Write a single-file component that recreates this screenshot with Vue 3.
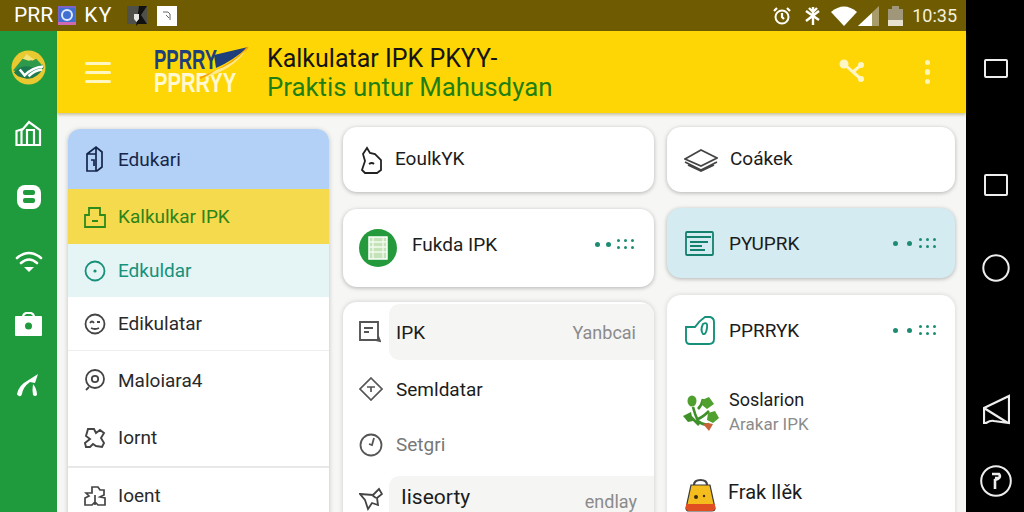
<script setup>
</script>

<template>
  <div class="screen">
    <div class="left">
      <div class="status">
        <span class="st-text">PRR</span>
        <svg class="st-app" width="18" height="19" viewBox="0 0 18 19"><rect width="18" height="19" fill="#7a63c9"/><rect x="1" y="2" width="16" height="14" fill="#3f6fd0"/><circle cx="9" cy="9" r="5" fill="none" stroke="#dfe9ff" stroke-width="2"/><rect y="16" width="18" height="3" fill="#d06ab0"/></svg>
        <span class="st-text st-ky">KY</span>
        <svg class="st-shield" width="20" height="20" viewBox="0 0 20 20"><rect width="20" height="18" fill="#50504a"/><path d="M12 0h8l-6 9 6 9h-9l-2 2z" fill="#111"/><path d="M7 8h5v5l-2.500 3-2.500-3z" fill="#e6e6e2"/></svg>
        <svg class="st-box" width="20" height="20" viewBox="0 0 20 20"><rect width="20" height="20" fill="#fff"/><path d="M6 6h5l2 2v6M9 9l3 3" stroke="#666" fill="none"/></svg>
        <div class="st-right">
          <svg width="20" height="20" viewBox="0 0 20 20" fill="none" stroke="#fff" stroke-width="2"><circle cx="10" cy="11" r="6.500"/><path d="M10 7v4l2 2M2 5l3-3M18 5l-3-3" stroke-width="2.200"/></svg>
          <svg class="m12" width="18" height="20" viewBox="0 0 18 20" fill="none" stroke="#fff" stroke-width="2.400"><path d="M9 1v18M2 5l13 9M2 15l13-10M5 2l4 4M13 2l-4 4"/></svg>
          <svg class="m9" width="26" height="20" viewBox="0 0 26 20"><path d="M0 6q13-11 26 0L13 20z" fill="#fff"/></svg>
          <svg class="m1" width="21" height="20" viewBox="0 0 21 20"><path d="M0 20 21 0v20z" fill="#a89d6a"/><path d="M0 20 14 7v13z" fill="#fff"/></svg>
          <svg class="m9" width="15" height="20" viewBox="0 0 15 20"><rect x="4" y="0" width="7" height="3" fill="#a0977a"/><rect y="3" width="15" height="11" fill="#a0977a"/><rect y="14" width="15" height="6" fill="#e6e2cf"/></svg>
          <span class="st-time">10:35</span>
        </div>
      </div>

      <div class="body">
        <nav class="rail">
          <svg class="rail-logo" width="35" height="35" viewBox="0 0 36 36">
            <circle cx="18" cy="18" r="17.500" fill="#e8c92f"/>
            <path d="M2 21 12 9l4-4 6 6 4-2 8 9-4 4-15 2z" fill="#2c9a4a"/>
            <path d="M12 9l4-5 8 6-6 1z" fill="#f2e27a"/>
            <path d="M3 23q7-8 15-6t15-2q0 7-6 11-6 5-13 3-8-1-11-6z" fill="#1d7a50"/>
            <path d="M9 20l5 6q8-8 19-9M18 27q6-6 14-7" stroke="#fff" stroke-width="2.600" fill="none"/>
          </svg>
          <svg class="ri ri1" width="28" height="26" viewBox="0 0 28 26" fill="none" stroke="#fff" stroke-width="2.200"><path d="M1.500 25V11l5-1.500V25zM7 10l1-1 6-7 11 8v15H1.500M12 25V10h7v15"/></svg>
          <svg class="ri ri2" width="26" height="26" viewBox="0 0 26 26"><rect x="1" y="1" width="24" height="24" rx="8" fill="#fff"/><rect x="7" y="6" width="12" height="5" rx="2" fill="#1f9a3c"/><rect x="7" y="14" width="12" height="5" rx="2" fill="#1f9a3c"/></svg>
          <svg class="ri ri3" width="28" height="24" viewBox="0 0 28 24" fill="none" stroke="#fff" stroke-width="2.600" stroke-linecap="round"><path d="M2 9q12-10 24 0M6 14q8-7 16 0"/><path d="M9 18h10l-5 5z" fill="#fff" stroke="none"/></svg>
          <svg class="ri ri4" width="27" height="24" viewBox="0 0 27 24"><path d="M8 5q0-3 3-4h5q3 1 3 4" fill="none" stroke="#fff" stroke-width="2"/><rect y="4" width="27" height="20" rx="1" fill="#fff"/><circle cx="13.500" cy="14" r="3.500" fill="#1f9a3c"/></svg>
          <svg class="ri ri5" width="24" height="24" viewBox="0 0 24 24" fill="#fff"><path d="M1 21Q3 12 11 8L22 1l-3 9-5-1q-7 5-8 12-1 3-3 2t-2-2z"/><path d="M17 11q4 5 4 11-2 2-4 0-1-5 0-11z"/></svg>
        </nav>

        <div class="main">
          <header class="appbar">
            <div class="burger"><i></i><i></i><i></i></div>
            <div class="brand">
              <span class="brand-top">PPRRY</span>
              <span class="brand-bot">PPRRYY</span>
              <svg class="swoosh" width="96" height="50" viewBox="0 0 96 50"><path d="M60 10 94 2Q80 15 62 23z" fill="#1d3f7c"/><path d="M94 2Q80 20 46 33" stroke="#f7a400" stroke-width="2" fill="none"/><path d="M62 25Q78 20 92 5 80 24 50 33z" fill="#ffe98a"/></svg>
            </div>
            <div class="titles">
              <div class="t1">Kalkulatar IPK PKYY-</div>
              <div class="t2">Praktis untur Mahusdyan</div>
            </div>
            <svg class="share" width="27" height="25" viewBox="0 0 27 25" fill="none" stroke="#fff6c8" stroke-width="3" stroke-linecap="round"><path d="M6 6l9 8 8-7M15 14l8 7"/><circle cx="6" cy="6" r="4.500" fill="#fff6c8" stroke="none"/><circle cx="23" cy="7" r="3" fill="#fff6c8" stroke="none"/><circle cx="23" cy="21" r="3" fill="#fff6c8" stroke="none"/></svg>
            <div class="kebab"><i></i><i></i><i></i></div>
          </header>

          <div class="content">
            <aside class="side">
              <div class="srow s-blue">
                <svg width="22" height="28" viewBox="0 0 22 28" fill="none" stroke="#15254a" stroke-width="1.700"><path d="M3 9l9-7 6 5v15l-5 4H3zM12 2v24M3 9h9M7 15h3v6"/></svg>
                <span>Edukari</span>
              </div>
              <div class="srow s-yellow">
                <svg width="22" height="22" viewBox="0 0 22 22" fill="none" stroke="#2f8a1c" stroke-width="1.800"><path d="M1 9h4V2h11v7h5v12H1zM8 15h6"/></svg>
                <span>Kalkulkar IPK</span>
              </div>
              <div class="srow s-teal">
                <svg width="22" height="22" viewBox="0 0 22 22" fill="none" stroke="#17907a" stroke-width="1.800"><circle cx="11" cy="11" r="9.500"/><circle cx="11" cy="11" r="1.600" fill="#17907a" stroke="none"/></svg>
                <span>Edkuldar</span>
              </div>
              <div class="srow s-line">
                <svg width="22" height="22" viewBox="0 0 22 22" fill="none" stroke="#444" stroke-width="1.800"><circle cx="11" cy="11" r="9.500"/><path d="M6 10q2-3 4 0M13 9h3M7 15q4 2 8 0"/></svg>
                <span>Edikulatar</span>
              </div>
              <div class="srow s-h58">
                <svg width="22" height="22" viewBox="0 0 22 22" fill="none" stroke="#444" stroke-width="1.800"><circle cx="11" cy="10" r="9"/><circle cx="11" cy="10" r="3.200"/><path d="M5 18l-3 3"/></svg>
                <span>Maloiara4</span>
              </div>
              <div class="srow s-line2 s-h59">
                <svg width="22" height="22" viewBox="0 0 22 22" fill="none" stroke="#444" stroke-width="1.900"><path d="M4 2h6l2 4 4-3 4 3-3 5 3 5-2 4-6-1-3-2-3 3H2l-1-4 5-4-4-3z"/></svg>
                <span>Iornt</span>
              </div>
              <div class="srow">
                <svg width="22" height="22" viewBox="0 0 22 22" fill="none" stroke="#444" stroke-width="1.700"><path d="M2 9h6V3h6l2 3h4v5l-4 2 5 1v7h-7l-3-3-3 3H1v-7l4-2zM11 11v10"/></svg>
                <span>Ioent</span>
              </div>
            </aside>

            <section class="col col2">
              <div class="card c-a">
                <svg width="24" height="28" viewBox="0 0 24 28" fill="none" stroke="#222" stroke-width="1.800"><path d="M3 8l4-6 3 5 5 1 6 6v10l-4 3H5L2 24l3-9zM9 18q3-2 5 0"/></svg>
                <span class="ct">EoulkYK</span>
              </div>
              <div class="card c-b">
                <svg width="38" height="38" viewBox="0 0 38 38"><circle cx="19" cy="19" r="19" fill="#249a3c"/><rect x="10" y="8" width="18" height="22" fill="#c5e3b8" stroke="#fff" stroke-width="1.500"/><path d="M10 13h18M10 18h18M10 23h18M14 8v22M24 8v22" stroke="#f3fbef" stroke-width="1.300"/></svg>
                <span class="ct ct-b">Fukda IPK</span>
                <span class="dots up"><b></b><b></b><em><u v-for="n in 6" :key="n"></u></em></span>
              </div>
              <div class="card list">
                <div class="lrow lr1">
                  <svg class="li" width="22" height="22" viewBox="0 0 22 22" fill="none" stroke="#555" stroke-width="1.900"><path d="M1 1h18v18H1zM5 7h9M5 11h5M17 19l4 1-2-5"/></svg>
                  <div class="lr-box"><span class="ct">IPK</span><span class="muted">Yanbcai</span></div>
                </div>
                <div class="lrow lr2">
                  <svg class="li" width="24" height="24" viewBox="0 0 24 24" fill="none" stroke="#555" stroke-width="1.700"><path d="M12 1l11 11-11 11L1 12zM8 10h8M12 10v5"/></svg>
                  <span class="ct">Semldatar</span>
                </div>
                <div class="lrow lr3">
                  <svg class="li" width="24" height="24" viewBox="0 0 24 24" fill="none" stroke="#555" stroke-width="1.800"><circle cx="12" cy="12" r="10.500"/><path d="M15 5l-2 7-3-1"/></svg>
                  <span class="ct gray">Setgri</span>
                </div>
                <div class="lrow lr4">
                  <svg class="li" width="24" height="24" viewBox="0 0 24 24" fill="none" stroke="#444" stroke-width="1.800"><path d="M1 7l13 1 6-6 3 5-5 4 1 7-6-2-4 6-3-9zM13 8l4 3"/></svg>
                  <div class="lr-box lr-box2"><span class="ct big">Iiseorty</span><span class="muted">endlay</span></div>
                </div>
              </div>
            </section>

            <section class="col col3">
              <div class="card c-a">
                <svg width="34" height="24" viewBox="0 0 34 24" fill="none" stroke="#444" stroke-width="1.700"><path d="M1 11L17 2l16 8-16 8zM1 14l16 8 16-8M4 17l13 6 13-6"/></svg>
                <span class="ct c3t">Coákek</span>
              </div>
              <div class="card c-c">
                <svg width="29" height="25" viewBox="0 0 29 25" fill="none" stroke="#16806f" stroke-width="1.800"><rect x="1" y="1" width="27" height="23" rx="1"/><path d="M1 6h25M5 11h18M5 15h12M5 19h15"/></svg>
                <span class="ct c3t c3t2">PYUPRK</span>
                <span class="dots d3"><b></b><b></b><em><u v-for="n in 6" :key="n"></u></em></span>
              </div>
              <div class="card feed">
                <div class="frow f1">
                  <svg width="30" height="30" viewBox="0 0 30 30" fill="none" stroke="#16907a" stroke-width="1.900"><path d="M1 12h9q4-6 10-10h5q4 1 4 5v17q0 5-5 5H5q-4 0-4-4z"/><path d="M18 9q5-3 4 4t-4 6q-3-4 0-10z"/></svg>
                  <span class="ct c3t">PPRRYK</span>
                  <span class="dots d3"><b></b><b></b><em><u v-for="n in 6" :key="n"></u></em></span>
                </div>
                <div class="frow f2">
                  <svg width="36" height="38" viewBox="0 0 36 38">
                    <path d="M10 14q2 8 5 14 6 5 11 3M20 6q-1 6-5 10M26 18q-6 6-11 8M8 24l8 8" stroke="#3f8f2a" stroke-width="2.600" fill="none"/>
                    <ellipse cx="9" cy="8" rx="4.500" ry="5.500" fill="#4fa02e"/><path d="M19 7l7-3 5 7-7 5-5-4z" fill="#4fa02e"/><path d="M25 20l7-2 4 7-6 5-6-3z" fill="#4fa02e"/><path d="M0 23l8-4 2 9-5 1z" fill="#3f9128"/><path d="M20 31l5-1 5 1-4 7z" fill="#c8633a"/>
                  </svg>
                  <div class="ftext"><span class="ct">Soslarion</span><span class="muted">Arakar IPK</span></div>
                </div>
                <div class="frow f3">
                  <svg width="31" height="34" viewBox="0 0 31 34"><path d="M9 7q0-5 6.500-5T22 7" fill="none" stroke="#444" stroke-width="2.200"/><path d="M6 7h19l5 23q0 3-3 3H4q-3 0-3-3z" fill="#f4bd1d" stroke="#3a3a3a" stroke-width="1.200"/><path d="M1 26h29v4q0 3-3 3H4q-3 0-3-3z" fill="#e04f22"/><circle cx="11" cy="19" r="2" fill="#3a2a10"/><circle cx="19" cy="18" r="1.200" fill="#3a2a10"/></svg>
                  <span class="ct">Frak lIěk</span>
                </div>
              </div>
            </section>
          </div>
        </div>
      </div>
    </div>

    <aside class="navbar">
      <svg class="n1" width="24" height="19" viewBox="0 0 24 19" fill="none" stroke="#eee" stroke-width="2"><rect x="1" y="1" width="22" height="17" rx="1"/></svg>
      <svg class="n2" width="24" height="22" viewBox="0 0 24 22" fill="none" stroke="#eee" stroke-width="2"><rect x="1" y="1" width="22" height="20" rx="1"/></svg>
      <svg class="n3" width="28" height="28" viewBox="0 0 28 28" fill="none" stroke="#eee" stroke-width="2"><circle cx="14" cy="14" r="12.700"/></svg>
      <svg class="n4" width="27" height="31" viewBox="0 0 27 31" fill="none" stroke="#eee" stroke-width="2.200"><path d="M26 2v27l-15-2q-3-1-8 2H1V14zM1 14l24 15"/></svg>
      <svg class="n5" width="32" height="32" viewBox="0 0 32 32" fill="none" stroke="#eee" stroke-width="2"><circle cx="16" cy="16" r="14.800"/><path d="M12 9h7q3 4-4 6v9M15 13h4" stroke-width="2.600"/></svg>
    </aside>
  </div>
</template>

<style>
html, body { margin: 0; background: #000; }
</style>

<style scoped>
.screen { width: 1024px; height: 512px; display: flex; overflow: hidden; font-family: Roboto, "Noto Sans", sans-serif; color: #1c1c1c; }
.left { width: 966px; display: flex; flex-direction: column; }
.status { height: 31px; flex: none; background: #6f5c02; display: flex; align-items: center; padding: 0 9px 0 14px; color: #fff; box-sizing: border-box; }
.st-text { font-size: 21px; line-height: 1; }
.st-app { margin-left: 5px; }
.st-ky { margin-left: 8px; letter-spacing: 1.500px; }
.st-shield { margin-left: 14px; }
.st-box { margin-left: 10px; }
.st-right { margin-left: auto; display: flex; align-items: center; }
.m12 { margin-left: 12px; }
.m9 { margin-left: 9px; }
.m1 { margin-left: 1px; }
.st-time { margin-left: 9px; font-size: 18px; color: #f4f0dc; }

.body { flex: 1; display: flex; min-height: 0; }
.rail { width: 57px; flex: none; background: #1f9a3c; display: flex; flex-direction: column; align-items: center; padding-top: 19px; box-sizing: border-box; }
.ri1 { margin-top: 35px; }
.ri2 { margin-top: 38px; }
.ri3 { margin-top: 39px; }
.ri4 { margin-top: 39px; }
.ri5 { margin-top: 37px; margin-left: -2px; }

.main { flex: 1; display: flex; flex-direction: column; min-width: 0; background: #f6f6f5; }
.appbar { height: 82px; flex: none; background: #ffd605; box-shadow: 0 2px 3px rgba(120,100,0,.35); display: flex; align-items: center; position: relative; z-index: 1; }
.burger { width: 26px; margin-left: 28px; display: flex; flex-direction: column; gap: 6px; }
.burger i { height: 3px; background: #fff6c0; border-radius: 2px; }
.brand { position: relative; width: 96px; margin-left: 43px; height: 48px; display: flex; flex-direction: column; align-items: flex-start; font-family: "Liberation Sans", sans-serif; font-weight: 700; line-height: 1; }
.brand-top { font-size: 28px; height: 23px; line-height: 23px; color: #1d3f7c; transform: scaleX(.66); transform-origin: left center; }
.brand-bot { font-size: 28px; height: 23px; line-height: 23px; color: #fff8d0; transform: scaleX(.72); transform-origin: left center; }
.swoosh { position: absolute; left: 0; top: -3px; }
.titles { margin-left: 17px; line-height: 29px; margin-top: 1px; }
.t1 { color: #141414; font-size: 25px; white-space: nowrap; }
.t2 { color: #1f7f12; font-size: 25.800px; white-space: nowrap; }
.share { margin-left: auto; margin-top: -3px; }
.kebab { margin: 0 36px 0 60px; display: flex; flex-direction: column; gap: 4px; }
.kebab i { width: 5.500px; height: 5.500px; border-radius: 50%; background: #fff6b8; }

.content { flex: 1; display: flex; align-items: flex-start; padding: 14px 11px 0 11px; min-height: 0; overflow: hidden; }
.side { width: 261px; flex: none; margin-top: 2px; background: #fff; border-radius: 12px 12px 0 0; box-shadow: 0 1px 5px rgba(0,0,0,.22); overflow: hidden; }
.srow { display: flex; align-items: center; gap: 12px; padding-left: 16px; font-size: 19px; color: #2a2a2a; height: 54px; box-sizing: border-box; white-space: nowrap; }
.srow svg { flex: none; }
.s-blue { height: 60px; background: #b3d1f6; color: #17264a; }
.s-yellow { height: 55px; background: #f6da4d; color: #2d8418; }
.s-teal { height: 53px; background: #e5f4f5; color: #15917c; }
.s-line { border-bottom: 1px solid #eee; }
.s-h58 { height: 58px; }
.s-h59 { height: 59px; }
.s-line2 { border-bottom: 2px solid #e8e8e8; }

.col { display: flex; flex-direction: column; flex: none; }
.col2 { width: 311px; margin-left: 14px; }
.col3 { width: 288px; margin-left: 13px; }
.card { background: #fff; border-radius: 14px; box-shadow: 0 1px 4px rgba(0,0,0,.28); display: flex; align-items: center; box-sizing: border-box; }
.c-a { height: 65px; padding-left: 17px; }
.c-b { height: 78px; margin-top: 17px; padding: 0 20px 0 16px; }
.c-c { height: 70px; margin-top: 16px; padding: 0 19px 0 18px; background: #d3ebf1; }
.ct { font-size: 19px; color: #1c1c1c; white-space: nowrap; }
.c-a .ct { margin-left: 11px; margin-top: -2px; }
.ct-b { margin-left: 15px; margin-bottom: 8px; }
.up { margin-bottom: 8px; }
.col3 .c-a .c3t, .c3t { margin-left: 12px; }
.c3t2 { margin-left: 15px; }
.f1 .c3t { margin-left: 14px; }
.gray { color: #777; }
.dots { margin-left: auto; display: flex; align-items: center; gap: 6px; }
.dots b { width: 5px; height: 5px; border-radius: 50%; background: #1d8c72; }
.dots em { display: grid; grid-template-columns: repeat(3, 3.500px); gap: 3.500px; }
.dots u { width: 3.500px; height: 3.500px; border-radius: 50%; background: #1d8c72; }
.d3 { gap: 9px; }
.d3 em { margin-left: -2.500px; }

.list { margin-top: 15px; height: 230px; flex-direction: column; align-items: stretch; border-radius: 14px 14px 0 0; overflow: hidden; box-shadow: 0 0 5px rgba(0,0,0,.18); }
.lrow { display: flex; align-items: center; position: relative; }
.li { flex: none; margin-left: 16px; }
.lr1 { margin-top: 2px; height: 56px; }
.lr-box { margin-left: 8px; flex: 1; align-self: stretch; background: #f5f5f4; border-radius: 10px 0 0 10px; display: flex; align-items: center; justify-content: space-between; padding: 0 18px 0 7px; }
.muted { color: #8b8b8b; font-size: 18px; white-space: nowrap; }
.lr2 { height: 58px; }
.lr2 .ct, .lr3 .ct { margin-left: 13px; }
.lr3 { height: 53px; }
.lr4 { height: 56px; margin-top: 5px; align-items: flex-start; }
.lr4 .li { margin-top: 11px; }
.lr-box2 { margin-left: 6px; padding: 9px 17px 0 12px; align-items: flex-start; height: 60px; }
.big { font-size: 21px; }
.lr-box2 .muted { margin-top: 6px; }

.feed { margin-top: 17px; height: 230px; flex-direction: column; align-items: stretch; border-radius: 14px 14px 0 0; box-shadow: 0 0 5px rgba(0,0,0,.14); }
.frow { display: flex; align-items: center; }
.f1 { height: 70px; padding: 0 19px 0 18px; }
.f1 svg { flex: none; }
.f2 { height: 60px; margin-top: 17px; padding-left: 16px; }
.f2 .ftext { margin-left: 10px; display: flex; flex-direction: column; line-height: 25px; margin-top: -1px; }
.f2 .ct { font-size: 18px; }
.f2 .muted { font-size: 17px; }
.f3 { height: 50px; margin-top: 28px; padding-left: 18px; }
.f3 .ct { margin-left: 12px; margin-top: -6px; font-size: 20px; }

.navbar { width: 58px; flex: none; background: #000; display: flex; flex-direction: column; align-items: center; box-sizing: border-box; padding-left: 2px; }
.n1 { margin-top: 59px; }
.n2 { margin-top: 96px; }
.n3 { margin-top: 58px; }
.n4 { margin-top: 112px; }
.n5 { margin-top: 40px; }
</style>
